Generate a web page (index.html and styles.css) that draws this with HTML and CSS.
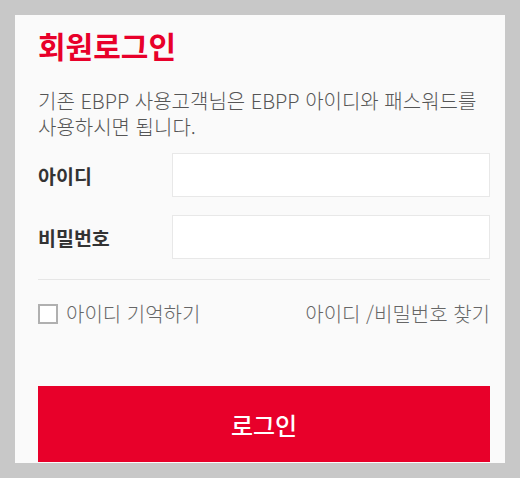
FILE: index.html
```html
<!DOCTYPE html>
<html lang="ko">
<head>
    <meta charset="UTF-8">
    <meta name="viewport" content="width=device-width, initial-scale=1.0">
    <title>회원로그인</title>
    <link rel="stylesheet" href="styles.css">
</head>
<body>
    <div class="login-box">
        <h1 class="login-title">회원로그인</h1>
        <p class="login-desc">기존 EBPP 사용고객님은 EBPP 아이디와 패스워드를 사용하시면 됩니다.</p>

        <form class="login-form" onsubmit="return false;">
            <div class="form-row">
                <label for="user-id">아이디</label>
                <input type="text" id="user-id" class="form-input">
            </div>
            <div class="form-row">
                <label for="user-pw">비밀번호</label>
                <input type="password" id="user-pw" class="form-input">
            </div>

            <div class="form-options">
                <label class="remember">
                    <span class="check-box"></span>
                    아이디 기억하기
                </label>
                <a href="#" class="find-link">아이디 /비밀번호 찾기</a>
            </div>

            <button type="submit" class="login-button">로그인</button>
        </form>
    </div>
</body>
</html>
```

FILE: styles.css
```css
body {
    margin: 0;
    padding: 15px 15px 0;
    background: #c8c8c8;
    font-family: "Noto Sans CJK KR", "Noto Sans", sans-serif;
}
.login-box {
    background: #fafafa;
    height: 448px;
    padding: 0 15px 0 23px;
    box-sizing: border-box;
    overflow: hidden;
}
.login-title {
    margin: 0;
    padding-top: 10px;
    font-size: 30px;
    line-height: 40px;
    font-weight: bold;
    color: #e8002a;
}
.login-desc {
    margin: 23px 0 13px;
    font-size: 20px;
    line-height: 26px;
    font-weight: 300;
    color: #555;
}
.form-row {
    display: flex;
    align-items: center;
    margin-bottom: 18px;
}
.form-row label {
    width: 134px;
    font-size: 19.5px;
    font-weight: bold;
    color: #333;
}
.form-input {
    flex: 1;
    height: 44px;
    box-sizing: border-box;
    border: 1px solid #e8e8e8;
    background: white;
    margin: 0;
}
.form-options {
    display: flex;
    justify-content: space-between;
    align-items: center;
    margin-top: 20px;
    border-top: 1px solid #e6e6e6;
    padding-top: 19px;
    font-size: 20px;
    line-height: 29px;
    font-weight: 300;
    color: #666;
}
.remember {
    display: flex;
    align-items: center;
    gap: 8px;
}
.check-box {
    width: 20px;
    height: 20px;
    box-sizing: border-box;
    border: 2px solid #b0b0b0;
    background: white;
}
.find-link {
    color: #666;
    text-decoration: none;
}
.login-button {
    display: block;
    width: 100%;
    height: 76px;
    margin-top: 58px;
    border: none;
    background: #e8002a;
    color: white;
    font-family: inherit;
    font-size: 24px;
    font-weight: 500;
}
```
